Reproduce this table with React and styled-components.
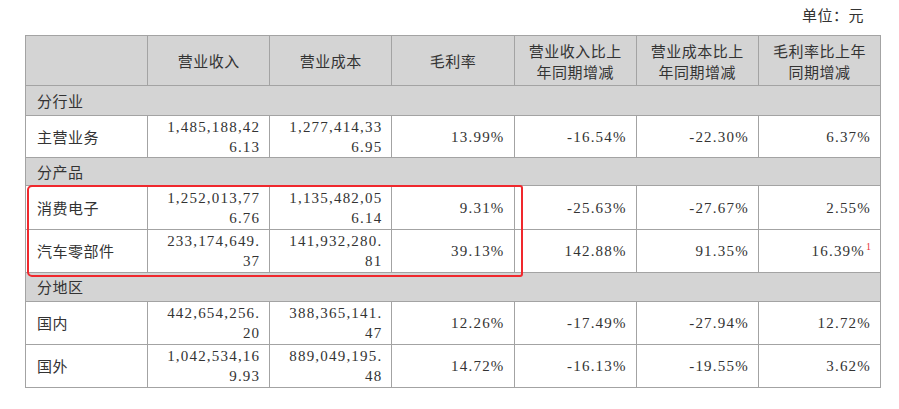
import styled, { createGlobalStyle } from "styled-components";

const GlobalStyle = createGlobalStyle`
  body {
    margin: 0;
    background: #ffffff;
    color: #333333;
    font-family: "Liberation Serif", "Noto Sans CJK SC", serif;
  }
`;

const Page = styled.div`
  width: 899px;
  padding-left: 25px;
  box-sizing: border-box;
`;

const Unit = styled.div`
  width: 856px;
  height: 35px;
  line-height: 30px;
  padding-right: 17px;
  box-sizing: border-box;
  text-align: right;
  font-family: "Noto Sans CJK SC", sans-serif;
  font-size: 15px;
  letter-spacing: 0.5px;
`;

const TableWrap = styled.div`
  position: relative;
  width: 856px;
`;

const Table = styled.table`
  width: 856px;
  border-collapse: collapse;
  table-layout: fixed;
  font-size: 15px;
`;

const HeadCell = styled.th`
  height: 49px;
  padding: 0;
  background: #d4d4d4;
  border: 1px solid #a3a3a3;
  font-family: "Noto Sans CJK SC", sans-serif;
  font-weight: normal;
  font-size: 15px;
  line-height: 21px;
  letter-spacing: 0.5px;
  text-align: center;
  vertical-align: middle;
  color: #333;
`;

const SectionRow = styled.tr`
  height: ${(p) => p.$h}px;
`;

const SectionCell = styled.td`
  padding: 0 0 0 11px;
  background: #d4d4d4;
  border: 1px solid #a3a3a3;
  font-family: "Noto Sans CJK SC", sans-serif;
  letter-spacing: 0.5px;
  line-height: 18px;
`;

const DataRow = styled.tr`
  height: ${(p) => p.$h}px;
`;

const NameCell = styled.td`
  padding: 0 0 0 11px;
  border: 1px solid #a3a3a3;
  font-family: "Noto Sans CJK SC", sans-serif;
  letter-spacing: 0.5px;
  line-height: 20px;
  vertical-align: middle;
`;

const NumCell = styled.td`
  padding: 0 9px 0 0;
  border: 1px solid #a3a3a3;
  text-align: right;
  vertical-align: middle;
  line-height: 20px;
  letter-spacing: 1.2px;
  white-space: nowrap;
`;

const Line = styled.div`
  line-height: 20px;
`;

const Note = styled.sup`
  margin-left: 1px;
  color: #e8313a;
  font-size: 10px;
  line-height: 0;
  letter-spacing: 0;
  vertical-align: 6px;
`;

const Mark = styled.div`
  position: absolute;
  left: 2px;
  top: 150px;
  width: 492px;
  height: 88px;
  border: 2px solid #f0282d;
  border-radius: 5px 3px 3px 5px;
  pointer-events: none;
`;

const headers = [
  "",
  ["营业收入"],
  ["营业成本"],
  ["毛利率"],
  ["营业收入比上", "年同期增减"],
  ["营业成本比上", "年同期增减"],
  ["毛利率比上年", "同期增减"],
];

const sections = [
  {
    title: "分行业",
    h: 30,
    rows: [
      {
        name: "主营业务",
        h: 42,
        income: ["1,485,188,42", "6.13"],
        cost: ["1,277,414,33", "6.95"],
        rate: "13.99%",
        incomeChg: "-16.54%",
        costChg: "-22.30%",
        rateChg: "6.37%",
      },
    ],
  },
  {
    title: "分产品",
    h: 28,
    rows: [
      {
        name: "消费电子",
        h: 44,
        income: ["1,252,013,77", "6.76"],
        cost: ["1,135,482,05", "6.14"],
        rate: "9.31%",
        incomeChg: "-25.63%",
        costChg: "-27.67%",
        rateChg: "2.55%",
      },
      {
        name: "汽车零部件",
        h: 43,
        income: ["233,174,649.", "37"],
        cost: ["141,932,280.", "81"],
        rate: "39.13%",
        incomeChg: "142.88%",
        costChg: "91.35%",
        rateChg: "16.39%",
        note: "1",
      },
    ],
  },
  {
    title: "分地区",
    h: 29,
    rows: [
      {
        name: "国内",
        h: 43,
        income: ["442,654,256.", "20"],
        cost: ["388,365,141.", "47"],
        rate: "12.26%",
        incomeChg: "-17.49%",
        costChg: "-27.94%",
        rateChg: "12.72%",
      },
      {
        name: "国外",
        h: 43,
        income: ["1,042,534,16", "9.93"],
        cost: ["889,049,195.", "48"],
        rate: "14.72%",
        incomeChg: "-16.13%",
        costChg: "-19.55%",
        rateChg: "3.62%",
      },
    ],
  },
];

const Lines = ({ lines }) => lines.map((l, i) => <Line key={i}>{l}</Line>);

export default function App() {
  return (
    <Page>
      <GlobalStyle />
      <Unit>单位：元</Unit>
      <TableWrap>
        <Table>
          <colgroup>
            {headers.map((_, i) => (
              <col key={i} style={{ width: 122 }} />
            ))}
          </colgroup>
          <thead>
            <tr>
              {headers.map((h, i) => (
                <HeadCell key={i}>
                  {h && h.map((l, j) => <div key={j}>{l}</div>)}
                </HeadCell>
              ))}
            </tr>
          </thead>
          <tbody>
            {sections.map((s) => [
              <SectionRow key={s.title} $h={s.h}>
                <SectionCell colSpan={7}>{s.title}</SectionCell>
              </SectionRow>,
              ...s.rows.map((r) => (
                <DataRow key={r.name} $h={r.h}>
                  <NameCell>{r.name}</NameCell>
                  <NumCell>
                    <Lines lines={r.income} />
                  </NumCell>
                  <NumCell>
                    <Lines lines={r.cost} />
                  </NumCell>
                  <NumCell>{r.rate}</NumCell>
                  <NumCell>{r.incomeChg}</NumCell>
                  <NumCell>{r.costChg}</NumCell>
                  <NumCell>
                    {r.rateChg}
                    {r.note && <Note>{r.note}</Note>}
                  </NumCell>
                </DataRow>
              )),
            ])}
          </tbody>
        </Table>
        <Mark />
      </TableWrap>
    </Page>
  );
}
